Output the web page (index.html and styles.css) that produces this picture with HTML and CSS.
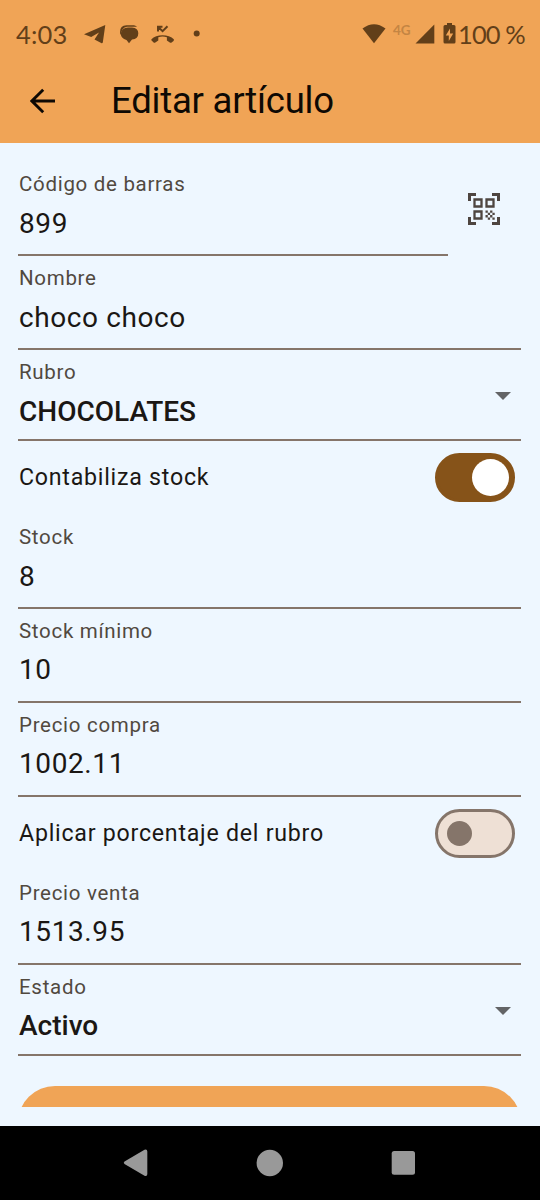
FILE: index.html
```html
<!DOCTYPE html>
<html lang="es">
<head>
<meta charset="utf-8">
<title>Editar artículo</title>
<link rel="stylesheet" href="styles.css">
</head>
<body>
<div class="screen">
  <header class="header">
    <div class="status">
      <span class="clock">4:03</span>
      <svg class="status-left" width="120" height="24" viewBox="84 22 120 24">
        <path d="M84 34.200 105.300 25 102.800 42.500Q102.300 43.600 101.200 43L94.500 39.500 99 32.500 91.200 37.100Z"/>
        <path d="M120 32Q120 25.500 126.500 25.300L134 25.300Q136.500 26 137 26.700L127 26.700Q121.500 27.500 120.800 35Q120 34 120 32Z"/>
        <path d="M120.800 33.500Q121.500 28 128 27.500H132Q138.300 28 138.300 33.300Q138.300 39 132 39.600L129 43.200 126.500 39.900Q120.800 38.500 120.800 33.500Z"/>
        <path d="M151.500 39.200C156 34 169 34 173.800 39.200Q174.300 40 173.500 40.900L171.600 42.600Q170.700 43.200 169.800 42.400L166.900 40.500V37.200Q162.500 35.800 158.300 37.200V40.500L155.300 42.500Q154.500 43.200 153.600 42.400L151.600 40.600Q151 39.900 151.500 39.200Z"/>
        <path class="missed" d="M158 31.500V26.700H162.500M158.200 27 162.600 31.200 167.500 26.300"/>
        <circle cx="196.700" cy="33.500" r="3"/>
      </svg>
      <span class="spacer"></span>
      <svg class="wifi" width="24" height="20" viewBox="0 0 24 20"><path d="M.5 4.500Q12-4 23.500 4.500L12 19.200Z"/></svg>
      <span class="network">4G</span>
      <svg class="signal" width="20" height="20" viewBox="0 0 20 20"><path d="M.5 19.500H19.300V.5Z"/></svg>
      <svg class="battery" width="13" height="21" viewBox="0 0 13 21"><path fill-rule="evenodd" d="M4 0H9V2H11Q12.500 2 12.500 3.500V19Q12.500 20.500 11 20.500H2Q.5 20.500 .5 19V3.500Q.5 2 2 2H4ZM7 5.500 2.800 12.500H5.800V18L10.200 10.500H7Z"/></svg>
      <span class="percent">100 %</span>
    </div>
    <div class="toolbar">
      <svg class="back" width="26" height="26" viewBox="0 0 26 26"><path d="M25 13H2M13.200 1.700 1.900 13 13.200 24.300"/></svg>
      <h1 class="title">Editar artículo</h1>
    </div>
  </header>

  <main class="form">
    <div class="barcode-row">
      <div class="field barcode"><label class="label">Código de barras</label><div class="value">899</div></div>
      <svg class="qr" width="32" height="32" viewBox="0 0 32 32">
        <path class="corner" d="M1.500 8V1.500H8M24 1.500H30.500V8M30.500 24V30.500H24M8 30.500H1.500V24"/>
        <path class="cell" d="M6.500 6.500H13.500V13.500H6.500ZM18.500 6.500H25.500V13.500H18.500ZM6.500 18.500H13.500V25.500H6.500Z"/>
        <path d="M17.500 17.500h2.300v2.300h2.300v2.300h-2.300v-2.300h-2.300zM22.100 17.500h2.300v2.300h2.300v2.300h-2.300v-2.300h-2.300zM17.500 22.100h2.300v2.300h2.300v2.300h-2.300v-2.300h-2.300zM22.100 22.100h2.300v2.300h2.300v2.300h-2.300v-2.300h-2.300z"/>
      </svg>
    </div>
    <div class="field"><label class="label">Nombre</label><div class="value">choco choco</div></div>
    <div class="field select">
      <label class="label">Rubro</label><div class="value">CHOCOLATES</div>
      <svg class="caret" width="16" height="8" viewBox="0 0 16 8"><path d="M0 0H16L8 8Z"/></svg>
    </div>
    <div class="switch-row"><span class="switch-label">Contabiliza stock</span><div class="switch on"><span class="thumb"></span></div></div>
    <div class="field"><label class="label">Stock</label><div class="value">8</div></div>
    <div class="field tight"><label class="label">Stock mínimo</label><div class="value">10</div></div>
    <div class="field tight"><label class="label">Precio compra</label><div class="value">1002.11</div></div>
    <div class="switch-row"><span class="switch-label">Aplicar porcentaje del rubro</span><div class="switch"><span class="thumb"></span></div></div>
    <div class="field tight"><label class="label">Precio venta</label><div class="value">1513.95</div></div>
    <div class="field select tight">
      <label class="label">Estado</label><div class="value">Activo</div>
      <svg class="caret" width="16" height="8" viewBox="0 0 16 8"><path d="M0 0H16L8 8Z"/></svg>
    </div>
    <div class="button-clip"><div class="button"></div></div>
  </main>

  <nav class="nav">
    <svg width="540" height="74" viewBox="0 1126 540 74">
      <path d="M124.500 1161.500 144.500 1149.800Q147.300 1149 147.300 1151.500V1174Q147.300 1176.800 144.500 1175.800L124.500 1164Q123 1162.800 124.500 1161.500Z"/>
      <circle cx="269.800" cy="1163" r="13.200"/>
      <rect x="391.700" y="1151" width="23.300" height="23.700" rx="2.500"/>
    </svg>
  </nav>
</div>
</body>
</html>
```
FILE: styles.css
```css
* { box-sizing: border-box; }

body {
  margin: 0;
  background: #eef7ff;
  font-family: Roboto, "Liberation Sans", sans-serif;
  color: #1b1714;
}

svg { display: block; flex: none; }

.screen {
  width: 540px;
  height: 1200px;
  display: flex;
  flex-direction: column;
  overflow: hidden;
}

.header { height: 143px; background: #f0a456; }

.status {
  height: 58px;
  padding: 10px 15px 0 16px;
  display: flex;
  align-items: center;
  color: #623f19;
  fill: #623f19;
  font: 25.500px/46px Lato, sans-serif;
  white-space: nowrap;
}
.clock { width: 68px; letter-spacing: .2px; padding-bottom: 1px; }
.missed { fill: none; stroke: #623f19; stroke-width: 2; }
.spacer { flex: 1; }
.wifi { margin-right: 7px; }
.network {
  width: 22px;
  color: #c48543;
  font: bold 13.500px/20px Lato, sans-serif;
  padding-bottom: 9px;
}
.signal { margin-right: 8px; }
.battery { margin-right: 2px; margin-top: -2px; }
.percent { width: 67px; letter-spacing: -.9px; padding-bottom: 1px; }

.toolbar { height: 85px; padding-left: 30px; display: flex; align-items: center; }
.back { fill: none; stroke: #0e0904; stroke-width: 2.900; }
.title {
  margin: 0 0 0 55px;
  font-size: 36.500px;
  font-weight: 400;
  line-height: 44px;
  letter-spacing: -.22px;
  color: #0e0904;
}

.form { height: 983px; padding: 19px 19px 0 18px; }
.barcode-row { display: flex; }
.barcode-row .barcode { width: 430px; }
.qr { margin: 31px 0 0 20px; fill: #4e4540; }
.corner { fill: none; stroke: #4e4540; stroke-width: 3; }
.cell { fill: none; stroke: #4e4540; stroke-width: 2.300; }

.field {
  position: relative;
  height: 94px;
  padding: 8px 0 0 1px;
  border-bottom: 2px solid #85756a;
}
.label {
  display: block;
  font-size: 20.500px;
  line-height: 28px;
  letter-spacing: .7px;
  color: #51493f;
}
.value {
  margin-top: 9px;
  font-size: 28px;
  line-height: 34px;
  letter-spacing: .6px;
}
.tight .value { margin-top: 8px; }
.select { height: 91px; }
.select .value { font-weight: 500; letter-spacing: 0; }
.caret { position: absolute; right: 10px; top: 42px; fill: #636466; }

.switch-row {
  height: 74px;
  padding: 0 6px 2px 1px;
  display: flex;
  align-items: center;
  justify-content: space-between;
}
.switch-label { font-size: 23.200px; line-height: 30px; letter-spacing: .75px; }
.switch {
  width: 80px;
  height: 49px;
  padding-left: 9px;
  display: flex;
  align-items: center;
  border: 3px solid #85756a;
  border-radius: 25px;
  background: #eee0d5;
}
.thumb { width: 25px; height: 25px; border-radius: 50%; background: #85756a; }
.switch.on { background: #865319; border-color: #865319; padding-left: 34px; }
.switch.on .thumb { width: 37px; height: 37px; background: #fff; }

.button-clip { height: 21px; margin-top: 30px; overflow: hidden; }
.button { height: 74px; border-radius: 37px; background: #f0a456; }

.nav { height: 74px; background: #000; fill: #999; }
```
